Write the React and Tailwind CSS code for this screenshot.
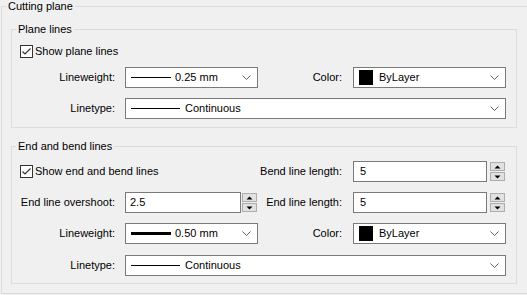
import React from "react";

const Chevron = () => (
  <svg width="9" height="5" viewBox="0 0 9 5" className="shrink-0">
    <polyline points="0.5,0.5 4.5,4.5 8.5,0.5" fill="none" stroke="#606060" strokeWidth="1" />
  </svg>
);

const Combo = ({ children, className = "" }) => (
  <div className={`flex h-[21px] items-center border border-[#7a7a7a] bg-white pl-[5px] pr-[6px] ${className}`}>
    <div className="flex flex-1 items-center">{children}</div>
    <Chevron />
  </div>
);

const LineSample = ({ w, thick }) => (
  <div className={`${thick ? "h-[3px]" : "h-[1px]"} bg-black`} style={{ width: w }} />
);

const Label = ({ children, pr = "pr-[10px]" }) => (
  <div className={`flex h-[21px] items-center justify-end whitespace-nowrap ${pr}`}>{children}</div>
);

const Checkbox = ({ label }) => (
  <div className="flex items-center gap-[2px] whitespace-nowrap">
    <div className="flex h-[13px] w-[13px] items-center justify-center border border-[#333] bg-white">
      <svg width="11" height="11" viewBox="0 0 11 11">
        <polyline points="1.5,5.5 4,8 9.5,2.5" fill="none" stroke="#333" strokeWidth="1.2" />
      </svg>
    </div>
    <span>{label}</span>
  </div>
);

const SpinBtn = ({ up }) => (
  <div className="flex h-[9px] w-[15px] items-center justify-center border border-[#adadad] bg-[#e1e1e1]">
    <svg width="7" height="4" viewBox="0 0 7 4">
      {up ? <polygon points="0.5,3.5 3.5,0.5 6.5,3.5" fill="#000" /> : <polygon points="0.5,0.5 3.5,3.5 6.5,0.5" fill="#000" />}
    </svg>
  </div>
);

const Spinner = () => (
  <div className="flex h-[21px] flex-col gap-[1px] pt-[1px]">
    <SpinBtn up />
    <SpinBtn />
  </div>
);

const NumInput = ({ value, w }) => (
  <div className={`flex h-[21px] items-center border border-[#7a7a7a] bg-white pl-[4px] ${w}`}>{value}</div>
);

const ColorValue = () => (
  <>
    <div className="h-[15px] w-[14px] bg-black" />
    <span className="ml-[6px]">ByLayer</span>
  </>
);

export default function App() {
  return (
    <div
      className="h-[295px] w-[527px] overflow-hidden bg-[#f0f0f0] text-[11px] leading-[13px] text-black"
      style={{ fontFamily: '"Liberation Sans", Arial, sans-serif' }}
    >
      <fieldset className="ml-[1px] w-[560px] border border-[#dcdcdc] pb-[9px]">
        <legend className="ml-[4px] px-[2px] leading-[13px]">Cutting plane</legend>

        <fieldset className="ml-[9px] mt-[10px] w-[506px] border border-[#dcdcdc] pb-[8px]">
          <legend className="ml-[4px] px-[2px] leading-[13px]">Plane lines</legend>
          <div className="mt-[9px] pl-[8px]">
            <Checkbox label="Show plane lines" />
          </div>
          <div className="mt-[9px] grid grid-cols-[113px_133px_95px_153px] gap-y-[10px]">
            <Label>Lineweight:</Label>
            <Combo>
              <LineSample w={40} />
              <span className="ml-[4px]">0.25 mm</span>
            </Combo>
            <Label pr="pr-[11px]">Color:</Label>
            <Combo>
              <ColorValue />
            </Combo>
            <Label>Linetype:</Label>
            <Combo className="col-span-3">
              <LineSample w={49} />
              <span className="ml-[5px]">Continuous</span>
            </Combo>
          </div>
        </fieldset>

        <fieldset className="ml-[9px] mt-[12px] w-[506px] border border-[#dcdcdc] pb-[7px]">
          <legend className="ml-[4px] px-[2px] leading-[13px]">End and bend lines</legend>
          <div className="mt-[8px] grid grid-cols-[113px_133px_95px_153px]">
            <div className="col-span-2 flex h-[21px] items-center pl-[8px]">
              <Checkbox label="Show end and bend lines" />
            </div>
            <Label pr="pr-[11px]">Bend line length:</Label>
            <div className="flex gap-[3px]">
              <NumInput value="5" w="w-[134px] pl-[6px]" />
              <Spinner />
            </div>

            <div className="mt-[10px]">
              <Label>End line overshoot:</Label>
            </div>
            <div className="mt-[10px] flex gap-[1px]">
              <NumInput value="2.5" w="w-[116px]" />
              <Spinner />
            </div>
            <div className="mt-[10px]">
              <Label pr="pr-[11px]">End line length:</Label>
            </div>
            <div className="mt-[10px] flex gap-[3px]">
              <NumInput value="5" w="w-[134px] pl-[6px]" />
              <Spinner />
            </div>

            <div className="mt-[10px]">
              <Label>Lineweight:</Label>
            </div>
            <div className="mt-[10px]">
              <Combo>
                <LineSample w={40} thick />
                <span className="ml-[4px]">0.50 mm</span>
              </Combo>
            </div>
            <div className="mt-[10px]">
              <Label pr="pr-[11px]">Color:</Label>
            </div>
            <div className="mt-[10px]">
              <Combo>
                <ColorValue />
              </Combo>
            </div>

            <div className="mt-[11px]">
              <Label>Linetype:</Label>
            </div>
            <div className="col-span-3 mt-[11px]">
              <Combo>
                <LineSample w={49} />
                <span className="ml-[5px]">Continuous</span>
              </Combo>
            </div>
          </div>
        </fieldset>
      </fieldset>
    </div>
  );
}
